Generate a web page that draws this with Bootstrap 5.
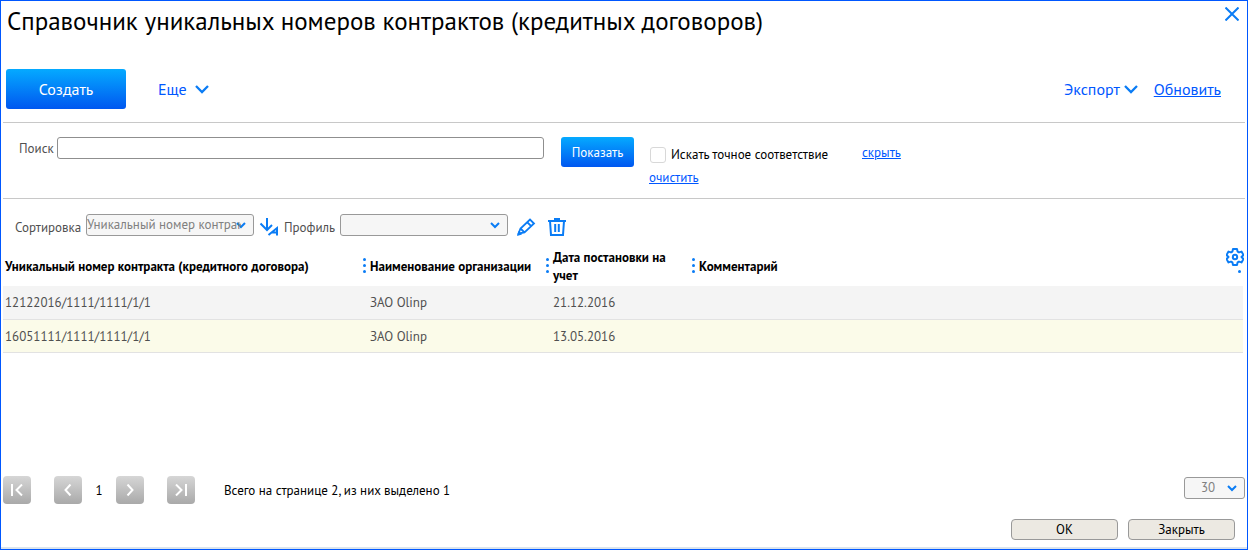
<!DOCTYPE html>
<html lang="ru">
<head>
<meta charset="utf-8">
<meta name="viewport" content="width=device-width, initial-scale=1">
<title>Справочник уникальных номеров контрактов</title>
<link href="https://cdn.jsdelivr.net/npm/bootstrap@5.3.0/dist/css/bootstrap.min.css" rel="stylesheet">
<style>
  body { font-family: "PT Sans", "Noto Sans", sans-serif; font-size: 13px; line-height: 18px; color: #000; background: #fff; }
  .window { border: 1px solid #0057ff; }
  .window-edge { height: 2px; background: #dbe4ec; }
  h1 { font-size: 25px; line-height: 32px; padding-left: 6px; }
  a, .menu-btn { color: #0057ff; }
  svg { display: block; flex: none; }
  .icon-btn { border: 0; padding: 0; background: none; color: #0a7cf5; }
  .close-btn { margin: 6px 8px 0 0; }
  .menu-btn { border: 0; padding: 0; background: none; }
  .menu-btn svg { color: #0a7cf5; }
  .menu-btn, .refresh { font-size: 16px; line-height: 20px; }
  .toolbar-row { padding: 32px 26px 13px 5px; }
  .more-btn { margin-left: 32px; }
  .btn-main { --bs-btn-color: #fff; --bs-btn-hover-color: #fff; --bs-btn-border-width: 0; --bs-btn-border-radius: 3px; background: linear-gradient(#05aaff, #0057f0); }
  .btn-create { width: 120px; height: 40px; font-size: 16px; }
  .btn-show { width: 73px; height: 30px; font-size: 13px; line-height: 18px; padding: 2px 0 0; margin-left: 17px; }
  .band { border-top: 1px solid #c8c8c8; margin: 0 2px; }
  .muted { color: #505050; }
  .search-band { min-height: 76px; padding: 14px 16px 0; }
  .search-label { width: 38px; margin-top: 3px; }
  .search-field { width: 487px; height: 22px; border: 1px solid #8f8f8f; border-radius: 3px; }
  .options { margin: 8px 29px 0 15px; width: 184px; }
  .tick { width: 16px; height: 16px; border: 1px solid #d8d8d8; border-radius: 3px; appearance: none; background: #fff; margin: 0 5px 0 1px; }
  .tick:checked { background: #0a7cf5; }
  .exact-label { padding-top: 1px; }
  .options .clear-link { display: inline-block; margin-top: 5px; }
  .hide-link { margin-top: 7px; }
  .controls { padding: 15px 12px 0; }
  .sort-label { width: 71px; } .profile-label { width: 56px; }
  .sort-label, .profile-label { margin-top: 5px; }
  .pick { height: 22px; border: 1px solid #999; border-radius: 3px; padding: 0; font-size: 13px; line-height: 20px; color: #808080; appearance: none;
    background: #f6f6f6 url("data:image/svg+xml,%3Csvg xmlns='http://www.w3.org/2000/svg' width='10' height='7'%3E%3Cpath d='M1 1l4 4 4-4' fill='none' stroke='%230a7cf5' stroke-width='2'/%3E%3C/svg%3E") no-repeat right 7px center; }
  .pick-wide { width: 168px; padding-right: 12px; }
  .pick-size { width: 61px; padding-left: 16px; }
  .table-area { margin: 9px 4px 0 2px; }
  .grid-table { table-layout: fixed; margin: 0; --bs-table-bg: transparent; }
  .grid-table th, .grid-table td { border: 0; padding: 2px 8px 0 7px; vertical-align: middle; }
  .grid-table th:first-child, .grid-table td:first-child { padding-left: 2px; }
  .grid-table th { height: 40px; font-weight: 700; color: #000; position: relative; }
  .grid-table td { height: 33px; color: #505050; border-bottom: 1px solid #e2e2e2; }
  .grid-table tbody tr { background: #f4f4f4; }
  .grid-table tbody tr.picked { background: #fbfbe9; }
  .grip { position: absolute; left: 0; top: 12px; }
  .col-number { width: 360px; } .col-org { width: 183px; } .col-date { width: 146px; }
  .settings { position: absolute; right: -1px; top: 2px; }
  .pager { padding: 0 2px 15px; }
  .page-btn { width: 28px; height: 28px; border: 0; border-radius: 4px; padding: 0; color: #fff; background: linear-gradient(#d6d6d6, #a9a9a9); }
  .page-number { width: 34px; }
  .page-edge { margin: 0 23px; }
  .page-total { margin-left: 6px; }
  .page-number, .page-total { padding-top: 2px; }
  .pager .pick { margin-top: 1px; }
  .footer-row { padding: 0 12px 7px; gap: 10px; }
  .btn-plain { width: 107px; height: 21px; border: 1px solid #999; border-radius: 4px; padding: 0; background: #ece9e2; color: #000; line-height: 18px; }
</style>
</head>
<body>
<div class="window min-vh-100 d-flex flex-column">
  <header class="d-flex justify-content-between align-items-start">
    <h1 class="fw-normal m-0 mt-1">Справочник уникальных номеров контрактов (кредитных договоров)</h1>
    <button class="icon-btn close-btn" aria-label="Закрыть окно"><svg width="14" height="14" viewBox="0 0 14 14"><path d="M.5.5l13 13M13.5.5l-13 13" stroke="currentColor" stroke-width="2"/></svg></button>
  </header>

  <div class="toolbar-row d-flex align-items-center">
    <button class="btn btn-main btn-create">Создать</button>
    <button class="menu-btn more-btn d-flex align-items-center gap-2">Еще <svg width="14" height="9" viewBox="0 0 14 9"><path d="M1 1l6 6 6-6" fill="none" stroke="currentColor" stroke-width="2.300"/></svg></button>
    <button class="menu-btn d-flex align-items-center gap-1 ms-auto">Экспорт <svg width="14" height="9" viewBox="0 0 14 9"><path d="M1 1l6 6 6-6" fill="none" stroke="currentColor" stroke-width="2.300"/></svg></button>
    <a href="#" class="refresh ms-3">Обновить</a>
  </div>

  <form class="band search-band d-flex align-items-start">
    <label for="q" class="muted search-label">Поиск</label>
    <input id="q" type="text" class="search-field">
    <button type="button" class="btn btn-main btn-show">Показать</button>
    <div class="options">
      <div class="d-flex align-items-center">
        <input type="checkbox" id="exact" class="tick"><label for="exact" class="exact-label">Искать точное соответствие</label>
      </div>
      <a href="#" class="clear-link">очистить</a>
    </div>
    <a href="#" class="hide-link">скрыть</a>
  </form>

  <div class="band controls d-flex align-items-start">
    <label for="sort" class="muted sort-label">Сортировка</label>
    <select id="sort" class="pick pick-wide"><option>Уникальный номер контракта</option></select>
    <button class="icon-btn ms-1 mt-1" aria-label="Направление сортировки"><svg width="22" height="18" viewBox="0 0 22 18"><path d="M9 0v11M2.500 5.500 9 12l5-5" fill="none" stroke="currentColor" stroke-width="2"/><path d="M10.500 17 19 10v7.500M14 14.500h5" fill="none" stroke="currentColor" stroke-width="2"/></svg></button>
    <label for="profile" class="muted profile-label ms-1">Профиль</label>
    <select id="profile" class="pick pick-wide"><option></option></select>
    <button class="icon-btn ms-2 mt-1" aria-label="Изменить профиль"><svg width="20" height="18" viewBox="0 0 20 18"><path d="M2.500 15.500l2-5L14 1.500l4 4-9.500 9zM11 4l4.200 4.200M4.500 10.500l4 4" fill="none" stroke="currentColor" stroke-width="1.800"/><path d="M1 18l1.500-5 3.500 3.500z" fill="currentColor"/></svg></button>
    <button class="icon-btn ms-2 mt-1 ps-1" aria-label="Удалить профиль"><svg width="18" height="18" viewBox="0 0 18 18"><path d="M0 3h18M6 1h6M2 3l1 14h12l1-14M7.200 6v8M10.800 6v8" fill="none" stroke="currentColor" stroke-width="2"/></svg></button>
  </div>

  <div class="table-area position-relative">
    <table class="table grid-table">
      <colgroup><col class="col-number"><col class="col-org"><col class="col-date"><col></colgroup>
      <thead>
        <tr>
          <th scope="col">Уникальный номер контракта (кредитного договора)</th>
          <th scope="col"><svg class="grip" width="3" height="16" fill="#0a7cf5"><circle cx="1.500" cy="1.500" r="1.500"/><circle cx="1.500" cy="7.500" r="1.500"/><circle cx="1.500" cy="13.500" r="1.500"/></svg>Наименование организации</th>
          <th scope="col"><svg class="grip" width="3" height="16" fill="#0a7cf5"><circle cx="1.500" cy="1.500" r="1.500"/><circle cx="1.500" cy="7.500" r="1.500"/><circle cx="1.500" cy="13.500" r="1.500"/></svg>Дата постановки на учет</th>
          <th scope="col"><svg class="grip" width="3" height="16" fill="#0a7cf5"><circle cx="1.500" cy="1.500" r="1.500"/><circle cx="1.500" cy="7.500" r="1.500"/><circle cx="1.500" cy="13.500" r="1.500"/></svg>Комментарий</th>
        </tr>
      </thead>
      <tbody>
        <tr><td>12122016/1111/1111/1/1</td><td>ЗАО Olinp</td><td>21.12.2016</td><td></td></tr>
        <tr class="picked"><td>16051111/1111/1111/1/1</td><td>ЗАО Olinp</td><td>13.05.2016</td><td></td></tr>
      </tbody>
    </table>
    <button class="icon-btn settings" aria-label="Настройка таблицы"><svg width="18" height="25" viewBox="0 0 18 25"><path d="M7 1h4l.6 2.600 1.400.8L15.500 3.600l2 3.400-2 2 2 2-2 3.400-2.500-.8-1.400.8L11 17H7l-.6-2.600-1.400-.8-2.500.8L.5 11l2-2-2-2 2-3.400 2.500.8 1.400-.8z" fill="none" stroke="currentColor" stroke-width="2" stroke-linejoin="round"/><circle cx="9" cy="9" r="2.200" fill="none" stroke="currentColor" stroke-width="2"/><circle cx="13.500" cy="23.500" r="1.500" fill="currentColor"/></svg></button>
  </div>

  <nav class="pager d-flex align-items-center mt-auto" aria-label="Страницы">
    <button class="page-btn d-flex align-items-center justify-content-center" aria-label="Первая"><svg width="12" height="12" viewBox="0 0 12 12"><path d="M1 0v12M11 .5 5.500 6l5.500 5.500" fill="none" stroke="currentColor" stroke-width="2"/></svg></button>
    <button class="page-btn page-edge me-0 d-flex align-items-center justify-content-center" aria-label="Предыдущая"><svg width="8" height="12" viewBox="0 0 8 12"><path d="M6.500.5 1.500 6l5 5.500" fill="none" stroke="currentColor" stroke-width="2"/></svg></button>
    <span class="page-number text-center">1</span>
    <button class="page-btn d-flex align-items-center justify-content-center" aria-label="Следующая"><svg width="8" height="12" viewBox="0 0 8 12"><path d="M1.500.5l5 5.500-5 5.500" fill="none" stroke="currentColor" stroke-width="2"/></svg></button>
    <button class="page-btn page-edge d-flex align-items-center justify-content-center" aria-label="Последняя"><svg width="12" height="12" viewBox="0 0 12 12"><path d="M11 0v12M1 .5 6.500 6 1 11.500" fill="none" stroke="currentColor" stroke-width="2"/></svg></button>
    <span class="page-total">Всего на странице 2, из них выделено 1</span>
    <select class="pick pick-size ms-auto align-self-start" aria-label="Строк на странице"><option>30</option></select>
  </nav>
  <footer class="footer-row d-flex justify-content-end">
    <button class="btn-plain">ОК</button>
    <button class="btn-plain">Закрыть</button>
  </footer>
  <div class="window-edge"></div>
</div>
<script src="https://cdn.jsdelivr.net/npm/bootstrap@5.3.0/dist/js/bootstrap.bundle.min.js"></script>
</body>
</html>
